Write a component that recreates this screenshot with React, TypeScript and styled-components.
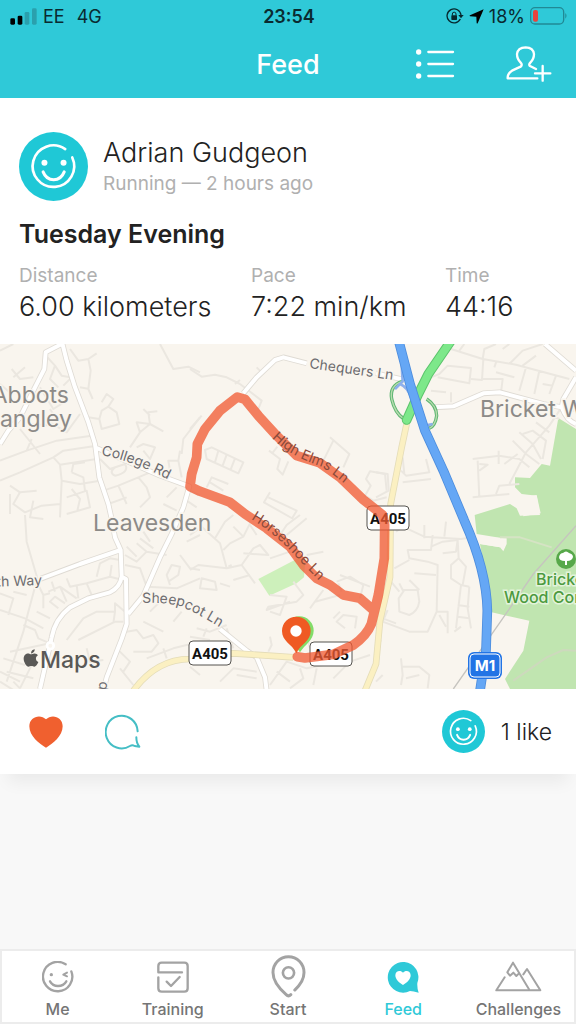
import React from "react";
import styled, { createGlobalStyle } from "styled-components";
import { FaApple } from "react-icons/fa";

const sans = `Inter, "Liberation Sans", sans-serif`;

const GlobalStyle = createGlobalStyle`
  *, *::before, *::after { box-sizing: border-box; }
  body { margin: 0; background: #f8f8f8; font-family: ${sans}; color: #222; }
  button { font: inherit; border: 0; padding: 0; background: none; cursor: pointer; }
  h1, h2, p, dl, dd, dt { margin: 0; font-weight: inherit; }
  svg { display: block; }
`;

const Screen = styled.div`
  min-height: 100vh;
  display: flex;
  flex-direction: column;
`;

const Header = styled.header`
  background: #2fc9d8;
  height: 98px;
`;

const StatusBar = styled.div`
  display: grid;
  grid-template-columns: 1fr auto 1fr;
  align-items: center;
  height: 32px;
  padding: 0 8px 0 10px;
  font-size: 18px;
  color: #0a2a30;
`;

const Carrier = styled.div`
  display: flex;
  align-items: center;
  gap: 6px;
`;

const Network = styled.span`
  margin-left: 6px;
`;

const Clock = styled.strong`
  font-weight: 600;
`;

const Indicators = styled.div`
  display: flex;
  align-items: center;
  justify-content: flex-end;
  gap: 5px;
`;

const TitleBar = styled.div`
  display: grid;
  grid-template-columns: 1fr auto 1fr;
  align-items: center;
  height: 64px;
  padding: 0 24px;
`;

const PageTitle = styled.h1`
  grid-column: 2;
  font-size: 27px;
  font-weight: 500;
  color: #fff;
`;

const HeaderActions = styled.div`
  display: flex;
  align-items: center;
  justify-content: flex-end;
  gap: 51px;
`;

const Card = styled.article`
  background: #fff;
  box-shadow: 0 16px 16px -8px rgba(0, 0, 0, 0.06);
`;

const Details = styled.div`
  padding: 34px 19px 20px;
`;

const Author = styled.div`
  display: flex;
  align-items: center;
  gap: 15px;
`;

const Name = styled.p`
  font-size: 27px;
  line-height: 34px;
  font-weight: 300;
`;

const Meta = styled.p`
  font-size: 19px;
  line-height: 28px;
  color: #b0b0b0;
`;

const ActivityTitle = styled.h2`
  margin-top: 16px;
  font-size: 25px;
  line-height: 34px;
  font-weight: 600;
`;

const Stats = styled.dl`
  display: grid;
  grid-template-columns: 232fr 194fr 112fr;
  margin-top: 11px;
`;

const StatLabel = styled.dt`
  font-size: 19px;
  line-height: 28px;
  color: #b0b0b0;
`;

const StatValue = styled.dd`
  font-size: 27px;
  line-height: 34px;
  font-weight: 300;
  white-space: nowrap;
`;

const MapDrawing = styled.svg`
  width: 100%;
  height: auto;
`;

const CardFooter = styled.footer`
  display: flex;
  align-items: center;
  height: 85px;
  padding: 0 24px 0 29px;
`;

const IconButton = styled.button<{ $gap?: number }>`
  display: flex;
  margin-right: ${(p) => p.$gap ?? 0}px;
`;

const Likes = styled.div`
  display: flex;
  align-items: center;
  gap: 16px;
  margin-left: auto;
  font-size: 23px;
  font-weight: 300;
`;

const TabBar = styled.nav`
  display: flex;
  margin-top: auto;
  height: 75px;
  padding-top: 5px;
  background: #fff;
  box-shadow: inset 0 0 0 2px #ececec;
`;

const Tab = styled.button<{ $active?: boolean }>`
  flex: 1 1 0;
  display: flex;
  flex-direction: column;
  align-items: center;
  font-size: 16px;
  font-weight: 500;
  line-height: 20px;
  color: ${(p) => (p.$active ? "#2fc9d8" : "#757575")};
`;

const TabIcon = styled.span`
  display: flex;
  align-items: center;
  height: 45px;
`;

function Avatar({ size }: { size: number }) {
  return (
    <svg width={size} height={size} viewBox="0 0 206 206" role="img" aria-label="Profile picture">
      <circle cx="103" cy="103" r="103" fill="#1fc8d6" />
      <g fill="none" stroke="#fff" strokeWidth="8" strokeLinecap="round">
        <path d="M138 51 A62 62 0 1 0 159 76" />
        <path d="M72 119 C84 150 123 150 135 119" strokeWidth="9" />
      </g>
      <circle cx="76" cy="92" r="9" fill="#fff" />
      <circle cx="133" cy="92" r="9" fill="#fff" />
    </svg>
  );
}

const SignalIcon = () => (
  <svg width="27" height="17" viewBox="0 0 81 51" aria-hidden="true">
    <rect x="1" y="31" width="14" height="19" rx="4" fill="#000" />
    <rect x="23" y="23" width="14" height="27" rx="4" fill="#000" />
    <rect x="44" y="12" width="14" height="38" rx="4" fill="#2aa0ad" />
    <rect x="66" y="1" width="14" height="49" rx="4" fill="#2aa0ad" />
  </svg>
);

const RotationLockIcon = () => (
  <svg width="18" height="16" viewBox="0 0 54 48" fill="none" stroke="#06272d" strokeWidth="4" aria-hidden="true">
    <path d="M43 33 A21 21 0 1 1 45 21" />
    <path d="M37 21 L53 21 L45 31 Z" fill="#06272d" stroke="none" />
    <rect x="16" y="22" width="17" height="14" rx="2" fill="#06272d" stroke="none" />
    <path d="M19 23 V18 A5 5 0 0 1 30 18 V23" strokeWidth="3" />
  </svg>
);

const LocationIcon = () => (
  <svg width="15" height="15" viewBox="0 0 45 45" aria-hidden="true">
    <path d="M44 1 L26 43 Q24 45 23 42 L22 23 L3 22 Q0 21 3 19 Z" fill="#000" />
  </svg>
);

const BatteryIcon = () => (
  <svg width="38" height="18" viewBox="0 0 114 54" aria-hidden="true">
    <rect x="2" y="2" width="99" height="49" rx="13" fill="none" stroke="#218995" strokeWidth="4" />
    <rect x="9" y="9" width="15" height="35" rx="6" fill="#e8433c" />
    <path d="M106 18 Q113 26 106 35 Z" fill="#218995" />
  </svg>
);

const ListIcon = () => (
  <svg width="39" height="32" viewBox="383 145 117 96" stroke="#fff" strokeWidth="7" strokeLinecap="round" aria-hidden="true">
    {[157, 193, 229].map((y) => (
      <g key={y}>
        <circle cx="391" cy={y} r="8" fill="#fff" stroke="none" />
        <path d={`M420 ${y} H494`} />
      </g>
    ))}
  </svg>
);

const AddFriendIcon = () => (
  <svg width="46" height="36" viewBox="654 139 138 108" fill="none" stroke="#fff" strokeWidth="7" strokeLinecap="round" strokeLinejoin="round" aria-hidden="true">
    <path d="M744 208 L726 199 Q721 195 727 189 Q738 178 738 163 Q736 144 713 143 Q689 144 687 163 Q687 178 698 189 Q704 195 698 201 L672 213 Q658 222 659 236 H748" />
    <path d="M764 199 V243 M741 221 H787" />
  </svg>
);

const HeartIcon = () => (
  <svg width="34" height="32" viewBox="0 0 102 96" aria-hidden="true">
    <path d="M51 95 C31 84 1 60 1 31 C1 1 35 -7 51 10 C67 -7 101 1 101 31 C101 60 71 84 51 95 Z" fill="#f0602f" />
  </svg>
);

const CommentIcon = () => (
  <svg width="36" height="36" viewBox="0 0 108 108" fill="none" stroke="#45bec5" strokeWidth="6" strokeLinecap="round" strokeLinejoin="round" aria-hidden="true">
    <path d="M98 52 A48 49 0 1 0 75 96 Q82 92 89 96 L103 98 Q94 88 94 70" />
  </svg>
);

const tabStroke = {
  fill: "none",
  stroke: "#a3a3a3",
  strokeWidth: 7,
  strokeLinecap: "round" as const,
  strokeLinejoin: "round" as const,
  "aria-hidden": true,
};

const MeIcon = () => (
  <svg width="32" height="32" viewBox="125 63 96 96" {...tabStroke}>
    <path d="M196 73 A44 44 0 1 0 213 94" />
    <path d="M149 124 Q157 138 173 138 Q190 138 198 124" />
    <path d="M200 98 L189 104 L200 109" strokeWidth="6" />
    <circle cx="153" cy="104" r="5" fill="#a3a3a3" stroke="none" />
  </svg>
);

const TrainingIcon = () => (
  <svg width="32" height="32" viewBox="471 63 96 96" {...tabStroke}>
    <path d="M546 97 H475 V78 Q475 68 485 68 H553 Q563 68 563 78 V145 Q563 155 553 155 H485 Q475 155 475 145 V112" />
    <path d="M500 125 L513 138 L539 111" />
  </svg>
);

const StartIcon = () => (
  <svg width="35" height="43" viewBox="811 45 106 130" {...tabStroke} strokeWidth={9}>
    <path d="M883 151 Q911 125 911 98 A47 48 0 0 0 817 98 Q817 130 857 165 Q864 172 871 165" />
    <circle cx="864" cy="99" r="17" strokeWidth="8" />
  </svg>
);

const FeedIcon = () => (
  <svg width="32" height="32" viewBox="294 63 96 96" aria-hidden="true">
    <path d="M389 158 Q373 154 363 153 A46 46 0 1 1 385 129 Q384 146 389 158 Z" fill="#2fc9d8" />
    <path d="M342 135 C330 128 319 118 319 106 C319 92 335 89 342 98 C349 89 365 92 365 106 C365 118 354 128 342 135 Z" fill="#fff" />
  </svg>
);

const ChallengesIcon = () => (
  <svg width="47" height="32" viewBox="619 63 141 96" {...tabStroke} strokeWidth={6}>
    <path d="M648 112 L623 151 H755 L715 87 L704 103" />
    <path d="M721 148 L673 68 L656 97 L664 107 L674 98 L683 108 L691 100" />
  </svg>
);

/* Residential streets, grouped by map tile. */
const streets = [
  {
    x: 0,
    y: 0,
    d: `M0 20 L40 0 M35 75 L60 105 L100 100 M40 100 L75 70 M133 30 L165 65 L185 95 L210 100
      M165 65 L150 105 L175 130 M210 15 L235 50 L265 45 L290 28 M265 45 L272 80 L265 135 L278 165
      M215 100 L190 125 M240 130 L268 135 M0 120 L35 150 M120 130 L160 195 L200 170 M265 220 L298 225
      L305 200 L325 188 L350 205 L358 240 L305 255 L298 225 M325 188 L340 165 L320 150 L305 175
      M0 350 L80 320 L170 290 L275 275 M0 410 L60 385 L160 340 L180 362 L290 345 M160 340 L190 320 L290 305
      M60 255 L120 330 M80 320 L95 285 M150 235 L200 265 L240 210 M150 195 L175 235 M95 240 L165 245
      M30 425 L60 445 L110 440 M60 445 L40 480 L75 505 L125 485 L180 480 M180 362 L185 410 L180 520
      M215 385 L220 360 L255 355 M215 385 L250 400 L255 440 M185 410 L240 420 L300 410 M200 460 L260 440
      L270 490 L200 510 M215 435 L240 465 L232 500 M100 470 L90 520 L130 525 M30 450 L30 510
      M300 345 L330 375 L375 360 Q390 385 345 395 Q325 385 345 370 M390 310 L420 265 L450 240 L490 262
      M420 265 L410 235 L450 240 L445 205 L472 202 M450 215 L430 195 M430 320 L450 345 L465 310 L430 300 L410 310
      M310 440 L355 425 L415 400 L450 385 M355 425 L380 480 M415 400 L440 430 L450 460 L420 490 M325 480 L380 460
      M480 0 L520 75 L565 68 L600 85 M545 330 L550 285 L600 220 M510 380 L505 350 L535 350 L540 320 M535 350 L545 400
      M500 460 L530 430 M570 440 L600 455 M560 470 L590 490 M490 480 L530 500`,
  },
  {
    x: 570,
    y: 0,
    d: `M0 75 L35 98 L75 92 L110 100 L150 120 M150 120 L215 170 L205 195 M150 108 L135 120 M200 70 L215 85
      M0 255 L35 215 M45 318 L65 310 L160 355 L145 388 L50 345 Z M85 320 L75 355 M110 332 L98 365 M135 343 L122 377
      M237 320 L270 345 L262 375 L278 392 L295 352 M245 330 L262 308 M50 430 L65 400 L115 420 M60 415 L100 440
      M240 445 L222 475 L310 525 M235 460 L320 500 L305 525 M420 280 L478 330 L460 370 M430 290 L400 350
      M585 390 L540 382 L528 405 L542 425 L525 455 L550 470 L590 460 M585 390 L590 440`,
  },
  {
    x: 1128,
    y: 0,
    d: `M225 15 L320 45 L420 62 L580 105 M250 20 L265 0 M320 45 L325 15 L360 0 M322 45 L318 108 L285 105
      M165 100 L190 90 L215 65 L285 72 L280 118 L185 100 M380 15 L400 0 M355 70 L360 55 M360 85 L415 100
      M400 60 L440 20 L500 0 M440 65 L480 35 M450 70 L430 140 M490 80 L475 150 M540 95 L520 150 M500 120 L530 125
      M320 105 L380 105 L375 145 M165 140 L210 145 M225 145 L225 175 M595 200 L550 200 L520 245 L450 325 L400 420
      M550 225 L520 210 M430 265 L470 300 L495 345 M440 270 L470 260 L510 290 L500 345 M410 290 L450 330 L490 360
      M480 235 L520 265 M290 345 L370 335 L430 345 L460 370 M305 350 L310 460 M310 360 L335 362 L310 380
      M368 320 L368 360 M385 360 L425 330 M290 460 L400 450 M360 450 L370 425 L430 420 M75 380 L90 395
      L160 385 L150 345 M80 340 L85 390 M80 415 L165 405 M0 385 L35 390 L38 440 L0 460`,
  },
  {
    x: 0,
    y: 513,
    d: `M75 0 L80 80 L112 190 L85 290 L70 350 L20 500 M0 285 L75 310 L130 340 M0 235 L40 250 L25 300
      M40 230 L80 240 M110 200 L130 240 L150 235 M130 240 L130 280 M145 230 L180 215 L230 250 M155 200 L165 230
      M180 215 L200 260 M200 190 L210 215 L260 205 L330 185 L368 195 M230 210 L235 250 M260 205 L275 240
      M290 185 L300 145 L330 130 L360 135 M330 185 L335 150 M175 280 L150 260 L165 245 L195 265 M110 290 L150 310
      M70 330 L105 345 L115 370 L150 385 M30 410 L150 385 M375 120 L410 140 L440 110 M375 150 L420 160 L440 215
      M410 85 L440 110 L500 120 M420 70 L460 100 M430 50 L450 80 M380 95 L410 125 M510 210 L500 180 L515 150
      L540 155 L535 180 L505 200 M440 215 L530 220 L600 190 M450 290 L500 240 M200 375 L250 310 L290 290 L345 290
      L340 325 M345 290 L345 265 L375 290 M235 375 L345 320 M260 400 L270 440 L310 435 M345 320 L370 320
      M380 350 L410 345 L430 370 L460 360 L475 385 L455 410 L400 410 M350 400 L390 440 L370 470 M360 460 L400 510
      M430 320 L490 350 M520 320 L545 290 M440 430 L520 400 L600 380 M490 400 L500 430 M0 470 L60 500 M20 470 L100 490
      M10 430 L75 450 M40 500 L60 520 M0 500 L40 525 M100 440 L60 520 M540 120 L570 160 L600 165 M560 80 L600 60`,
  },
  {
    x: 570,
    y: 513,
    d: `M0 60 L35 35 L90 85 L110 160 L25 150 L0 165 M75 70 L105 20 L130 0 M100 105 L120 85 L160 65 L130 35
      M125 150 L115 155 M160 65 L180 25 M110 160 L155 150 L190 100 L210 90 L235 120 L160 115 M155 150 L195 205
      M180 180 L130 195 M240 130 L300 110 M180 30 L200 60 M270 60 L290 30 L330 0 M290 60 L350 10 M30 220 L80 225
      L75 200 L35 190 Z M90 205 L120 215 M310 200 L340 240 L320 260 L235 275 L230 285 L300 260 M240 240 L290 245
      L270 300 L240 290 M240 365 L245 390 L235 410 M350 120 L400 110 M360 280 L400 225 M375 260 L450 240
      M440 200 L480 185 L520 210 L510 250 M450 180 L540 215 M445 205 L455 230 M465 340 L440 320 L460 300 L500 305
      L495 340 M430 310 L450 290 M360 400 L350 360 M20 340 L60 350 L110 330 M40 365 L50 340 M0 365 L60 375
      M130 400 L110 340 M140 480 L200 490 M240 510 L290 440 L350 460 L400 450 M260 470 L300 500 M330 460 L340 490
      L300 520 M380 460 L370 510 M430 490 L480 440 L540 420 M440 450 L470 450 M0 455 L30 480 M90 500 L130 460 L200 470`,
  },
  {
    x: 1128,
    y: 513,
    d: `M60 50 L80 35 L145 65 L255 72 L300 65 M145 30 L145 70 M210 20 L205 65 M170 60 L165 105 L95 105 L100 130
      L155 140 L185 150 L182 290 L155 350 L100 350 L20 320 L35 285 M165 95 L200 80 L245 75 L240 110 L200 115
      M55 160 L100 135 M115 175 L180 180 M245 75 L248 130 L225 150 L225 190 L255 210 L280 215 M248 130 L270 155
      L260 210 M255 210 L240 340 M280 215 L275 280 L285 340 M245 270 L280 275 M245 305 L280 310 M180 290 L215 290
      L215 355 M190 300 L210 335 M235 350 L255 335 M70 205 L80 225 L125 225 L130 260 Q125 290 100 300 L70 290
      L68 250 L85 225 M100 195 L130 225 M45 200 L70 230 M20 310 L60 325 M75 430 L80 480 L75 510 M75 455 L130 455
      L160 480 L155 520 M90 490 L130 480 M10 370 L15 380 M0 500 L20 480`,
  },
];

/* Wider roads, in thirds of a map unit. */
const whiteRoads = `M185 -10 L200 50 L225 130 L265 235 L285 300 L298 400 L325 480 L335 525 L345 580 L362 618
  L365 698 L378 705 L380 840 L365 885 L320 1000 L310 1040
  M185 0 L137 25 L133 75 L105 130 L60 220 L25 260 L0 300
  M290 312 L480 395 L568 427 L550 490 L515 570 L480 640 L430 755 L385 810
  M362 618 L240 660 L120 705 M365 698 Q360 730 330 745 L265 763 L210 790 Q165 825 155 880 L150 903 L120 1035
  M730 148 L770 100 L825 48 L850 40 L920 58 M1128 88 L1215 108
  M1300 190 L1360 187 L1450 148 L1500 145 L1630 180 L1685 190 M1635 0 L1728 80
  M1728 100 L1690 165 L1685 190 Q1700 230 1728 240
  M660 855 L740 920 L770 940 L795 1000 L800 1040`;

const aRoads = `M400 1040 Q470 945 570 945 L700 928 L880 940
  M1222 230 L1205 310 L1172 480 L1170 700 L1140 830 L1128 960 L1095 1040`;

const motorway = `M1196 -10 L1230 120 L1275 260 L1330 380 L1393 530 Q1460 680 1462 800 L1458 920 L1440 1040`;

const slipRoads = `M1207 112 Q1168 125 1175 165 Q1185 208 1212 225 M1280 165 Q1310 185 1310 215 Q1306 245 1288 253`;

const dualCarriageway = `M1352 -8 L1285 90 L1255 150 L1220 228`;

const woodland = `M1675 222 L1728 255 V1035 H1530 L1515 1005 L1570 920 L1588 830 L1475 805 L1440 600 L1500 610
  L1508 583 L1430 570 L1424 513 L1530 480 L1550 493 L1560 515 L1620 513 L1610 455 L1565 450 L1545 430 L1545 400
  L1590 402 L1625 360 L1650 365 Z`;

const routeLine = `M892 938 L915 942 L1000 931 L1060 903 Q1100 875 1114 840 L1135 753 L1153 643 L1154 543
  L1148 513 L1090 467 L1020 400 L960 357 L890 335 L830 275 L775 215 L735 166 L712 159 L660 200 L615 255
  L592 300 L590 340 L575 390 L570 428 L600 442 L690 475 L735 510 L800 553 L870 608 L910 663 L950 703
  L990 723 L1030 753 L1080 763 L1122 800`;

function Shield({ x, y }: { x: number; y: number }) {
  return (
    <g>
      <rect x={x} y={y} width="42" height="24" rx="4" fill="#fff" stroke="#55534f" />
      <text x={x + 21} y={y + 18} textAnchor="middle" fill="#111" fontSize="15" fontWeight="700" fontFamily="Roboto, sans-serif">
        A405
      </text>
    </g>
  );
}

const roadLabels = [
  { id: "college", d: "M101 111 Q138 118 180 142", text: "College Rd" },
  { id: "chequers", d: "M309 24 L400 37", text: "Chequers Ln" },
  { id: "elms", d: "M272 94 Q288 111 320 122 Q334 130 356 150", text: "High Elms Ln" },
  { id: "horseshoe", d: "M251 175 Q276 190 296 213 L334 252", text: "Horseshoe Ln" },
  { id: "sheepcot", d: "M142 259 Q165 258 180 262 Q200 270 230 290", text: "Sheepcot Ln" },
];

function RouteMap() {
  return (
    <MapDrawing viewBox="0 0 576 345" role="img" aria-label="Map of the running route">
      <rect width="576" height="345" fill="#f9f5ee" />
      <svg width="576" height="345" viewBox="0 0 1728 1035" fill="none" strokeLinejoin="round">
        <path d={woodland} fill="#c0e5b0" />
        <path d="M1435 578 L1520 583 L1520 600 L1510 622 L1500 610 L1440 600 Z M1565 460 L1610 453 L1622 508 L1570 517 Z" fill="#f9f5ee" />
        <path d="M775 705 L900 640 L915 660 L912 700 L890 718 L808 755 Z" fill="#cdf0bb" />
        <path d="M1500 580 L1560 580 L1655 610" stroke="#d5e3c4" strokeWidth="6" />
        <path d="M1540 1010 L1640 940 L1690 918 L1728 920" stroke="#cdd9bd" strokeWidth="6" />
        <path d="M1728 545 L1600 690 L1500 835 L1360 1035" stroke="#c6c4bf" strokeWidth="4" />
        <g stroke="#ebe7e0" strokeWidth="6">
          {streets.map((tile) => (
            <path key={`${tile.x}-${tile.y}`} d={tile.d} transform={`translate(${tile.x} ${tile.y})`} />
          ))}
        </g>
        <path d={whiteRoads} stroke="#dfdbd4" strokeWidth="17" />
        <path d={whiteRoads} stroke="#fff" strokeWidth="12" />
        <circle cx="151" cy="905" r="10" fill="#f9f5ee" stroke="#fff" strokeWidth="8" />
        <path d={aRoads} stroke="#e4dcb8" strokeWidth="20" />
        <path d={aRoads} stroke="#fbf0c2" strokeWidth="15" />
        <path d={slipRoads} stroke="#5fb673" strokeWidth="10" />
        <path d={slipRoads} stroke="#b8dcae" strokeWidth="4" />
        <path d="M1185 135 L1208 112 L1205 60 M1200 120 Q1225 130 1235 165 M1275 245 L1298 240" stroke="#8db0ec" strokeWidth="8" />
        <path d={dualCarriageway} stroke="#5cc46c" strokeWidth="29" strokeLinecap="round" />
        <path d={dualCarriageway} stroke="#7de88a" strokeWidth="23" strokeLinecap="round" />
        <path d={motorway} stroke="#4d8ddd" strokeWidth="29" />
        <path d={motorway} stroke="#65a7f5" strokeWidth="24" />
      </svg>

      <g fontFamily={sans} fill="#8c8a87" fontSize="23" stroke="#f9f5ee" strokeWidth="3" paintOrder="stroke">
        <text x="69" y="59" textAnchor="end">Abbots</text>
        <text x="72" y="83" textAnchor="end">Langley</text>
        <text x="93" y="187">Leavesden</text>
        <text x="480" y="73">Bricket Wood</text>
      </g>

      <g fontFamily={sans} fill="#6d6c70" fontSize="14" stroke="#f9f5ee" strokeWidth="3" paintOrder="stroke">
        {roadLabels.slice(0, 2).concat(roadLabels.slice(4)).map((label) => (
          <React.Fragment key={label.id}>
            <path id={label.id} d={label.d} fill="none" stroke="none" />
            <text>
              <textPath href={`#${label.id}`}>{label.text}</textPath>
            </text>
          </React.Fragment>
        ))}
        <text x="42" y="241" textAnchor="end" transform="rotate(-2 42 241)">South Way</text>
        <text transform="translate(100 337) rotate(100)">d</text>
      </g>

      <Shield x={189} y={297} />
      <Shield x={367} y={162} />
      <Shield x={310} y={298} />

      <g fontFamily={sans} fill="#4c9a3f" fontSize="16" fontWeight="500" stroke="#e3f3da" strokeWidth="3" paintOrder="stroke">
        <text x="536" y="241">Bricket</text>
        <text x="504" y="259">Wood Common</text>
      </g>
      <circle cx="566" cy="215" r="10" fill="#57a84a" />
      <path d="M565 221 V217 Q559 217 559 213 Q560 209 563 209 Q566 206 569 209 Q573 210 573 213 Q572 217 567 217 V221 Z" fill="#fff" />

      <rect x="468" y="308" width="34" height="27" rx="6" fill="#2274e5" />
      <rect x="470" y="310" width="30" height="23" rx="4" fill="#2274e5" stroke="#fff" />
      <text x="485" y="327" textAnchor="middle" fill="#fff" fontFamily={sans} fontSize="15" fontWeight="700">M1</text>

      <svg width="576" height="345" viewBox="0 0 1728 1035" fill="none" strokeLinejoin="round" strokeLinecap="round">
        <path d={routeLine} stroke="#f05a32" strokeOpacity="0.76" strokeWidth="29" />
        <path d="M900 925 C880 895 855 888 855 860 A43 43 0 0 1 941 860 C941 888 914 902 900 925 Z" fill="#83dd69" />
        <path d="M889 928 C875 898 846 893 846 861 A43 43 0 0 1 932 861 C932 893 903 898 889 928 Z" fill="#ef5a23" />
        <circle cx="888" cy="861" r="17" fill="#fff" />
      </svg>

      <g fontFamily={sans} fill="#8a4a3a" fontSize="14">
        {roadLabels.slice(2, 4).map((label) => (
          <React.Fragment key={label.id}>
            <path id={label.id} d={label.d} fill="none" />
            <text>
              <textPath href={`#${label.id}`}>{label.text}</textPath>
            </text>
          </React.Fragment>
        ))}
      </g>

      <FaApple x="21" y="304" width="19" height="21" size={20} color="#5a5957" />
      <text x="40" y="324" fill="#5a5957" fontFamily={sans} fontSize="23" fontWeight="500">Maps</text>
    </MapDrawing>
  );
}

const tabs = [
  { label: "Me", icon: <MeIcon /> },
  { label: "Training", icon: <TrainingIcon /> },
  { label: "Start", icon: <StartIcon /> },
  { label: "Feed", icon: <FeedIcon />, active: true },
  { label: "Challenges", icon: <ChallengesIcon /> },
];

const stats = [
  { label: "Distance", value: "6.00 kilometers" },
  { label: "Pace", value: "7:22 min/km" },
  { label: "Time", value: "44:16" },
];

export default function App() {
  return (
    <Screen>
      <GlobalStyle />
      <Header>
        <StatusBar>
          <Carrier>
            <SignalIcon />
            <span>EE</span>
            <Network>4G</Network>
          </Carrier>
          <Clock>23:54</Clock>
          <Indicators>
            <RotationLockIcon />
            <LocationIcon />
            <span>18%</span>
            <BatteryIcon />
          </Indicators>
        </StatusBar>
        <TitleBar>
          <PageTitle>Feed</PageTitle>
          <HeaderActions>
            <IconButton aria-label="List view"><ListIcon /></IconButton>
            <IconButton aria-label="Add friend"><AddFriendIcon /></IconButton>
          </HeaderActions>
        </TitleBar>
      </Header>

      <main>
        <Card>
          <Details>
            <Author>
              <Avatar size={69} />
              <div>
                <Name>Adrian Gudgeon</Name>
                <Meta>Running — 2 hours ago</Meta>
              </div>
            </Author>
            <ActivityTitle>Tuesday Evening</ActivityTitle>
            <Stats>
              {stats.map((stat) => (
                <div key={stat.label}>
                  <StatLabel>{stat.label}</StatLabel>
                  <StatValue>{stat.value}</StatValue>
                </div>
              ))}
            </Stats>
          </Details>
          <RouteMap />
          <CardFooter>
            <IconButton aria-label="Like" $gap={42}><HeartIcon /></IconButton>
            <IconButton aria-label="Comment"><CommentIcon /></IconButton>
            <Likes>
              <Avatar size={43} />
              <span>1 like</span>
            </Likes>
          </CardFooter>
        </Card>
      </main>

      <TabBar aria-label="Main">
        {tabs.map((tab) => (
          <Tab key={tab.label} $active={tab.active} aria-current={tab.active ? "page" : undefined}>
            <TabIcon>{tab.icon}</TabIcon>
            {tab.label}
          </Tab>
        ))}
      </TabBar>
    </Screen>
  );
}
